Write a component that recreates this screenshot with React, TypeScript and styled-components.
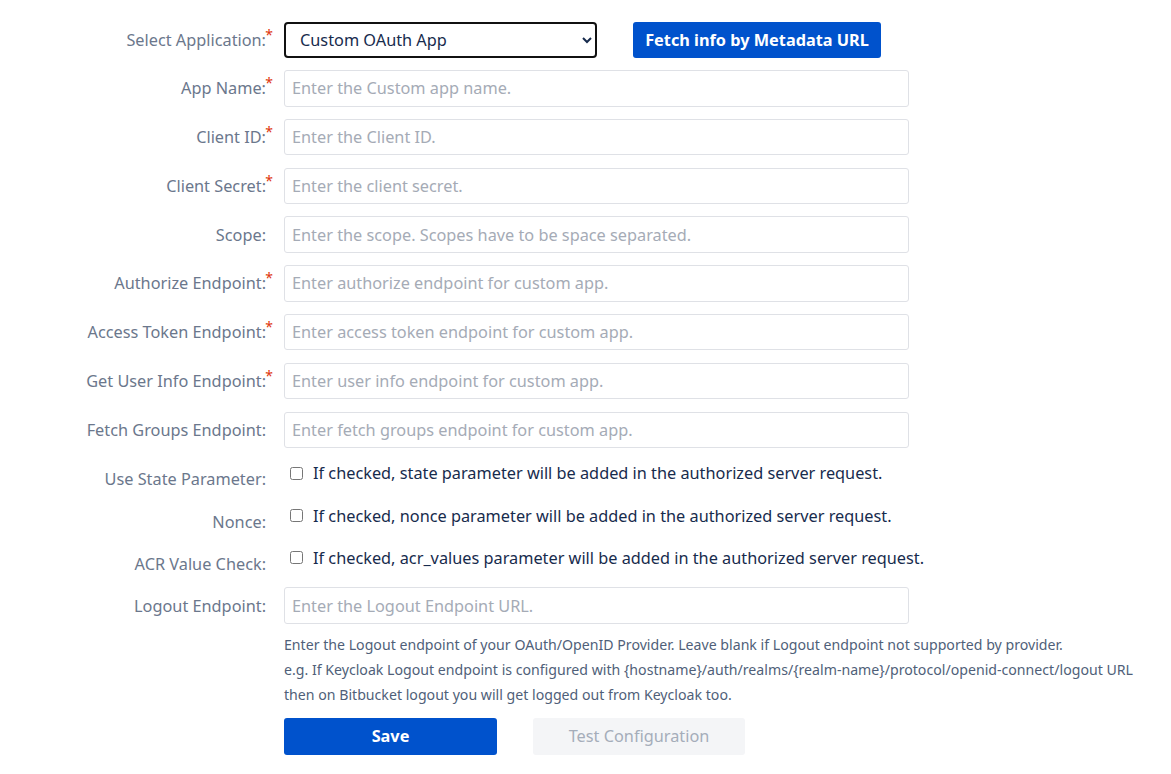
import styled, { createGlobalStyle } from "styled-components";

const GlobalStyle = createGlobalStyle`
  html, body {
    margin: 0;
    padding: 0;
    background: #ffffff;
    font-family: "Noto Sans", "Open Sans", sans-serif;
  }
`;

const Form = styled.form`
  display: flex;
  flex-direction: column;
  padding-top: 22px;
  width: 1171px;
`;

const Row = styled.div<{ $height?: number; $gap?: number; $align?: string }>`
  display: flex;
  align-items: ${(p) => p.$align || "center"};
  height: ${(p) => p.$height ?? 36}px;
  margin-bottom: ${(p) => p.$gap ?? 12.8}px;
`;

const Label = styled.label<{ $offset?: number }>`
  position: relative;
  flex: 0 0 266px;
  margin-right: 18px;
  text-align: right;
  font-size: 16.3px;
  line-height: 24px;
  color: #6b778c;
  padding-top: ${(p) => p.$offset ?? 0}px;
`;

const Required = styled.span`
  position: absolute;
  right: -7px;
  top: -5px;
  color: #de350b;
  font-size: 14px;
`;

const Select = styled.select`
  width: 313px;
  height: 36px;
  box-sizing: border-box;
  border: 2px solid #111111;
  border-radius: 4px;
  padding: 0 8px 0 10px;
  font-family: inherit;
  font-size: 16.3px;
  color: #172b4d;
  background: #ffffff;
`;

const Button = styled.button<{ $variant?: "primary" | "disabled"; $width: number }>`
  width: ${(p) => p.$width}px;
  height: 37px;
  border: none;
  border-radius: 3px;
  font-family: inherit;
  font-size: 16.3px;
  font-weight: ${(p) => (p.$variant === "disabled" ? 400 : 700)};
  background: ${(p) => (p.$variant === "disabled" ? "#f4f5f7" : "#0052cc")};
  color: ${(p) => (p.$variant === "disabled" ? "#a5adba" : "#ffffff")};
  cursor: pointer;
`;

const FetchButton = styled(Button)`
  margin-left: 36px;
  height: 36px;
`;

const Input = styled.input`
  width: 625px;
  height: 36.5px;
  box-sizing: border-box;
  border: 1px solid #dfe1e6;
  border-radius: 3px;
  padding: 0 7px;
  font-family: inherit;
  font-size: 16.3px;
  color: #172b4d;
  background: #ffffff;

  &::placeholder {
    color: #a5abb6;
  }
`;

const CheckLabel = styled.label`
  display: flex;
  align-items: center;
  padding-top: 1px;
  font-size: 16.3px;
  line-height: 24px;
  color: #172b4d;
`;

const CheckBox = styled.input`
  width: 13px;
  height: 13px;
  margin: 0 10px 0 6px;
`;

const Help = styled.div`
  margin-left: 284px;
  margin-top: 8px;
  font-size: 14.15px;
  line-height: 25px;
  color: #505f79;
`;

const Actions = styled.div`
  display: flex;
  gap: 36px;
  margin-left: 284px;
  margin-top: 11px;
`;

const textFields = [
  { label: "App Name:", placeholder: "Enter the Custom app name.", required: true },
  { label: "Client ID:", placeholder: "Enter the Client ID.", required: true },
  { label: "Client Secret:", placeholder: "Enter the client secret.", required: true },
  { label: "Scope:", placeholder: "Enter the scope. Scopes have to be space separated.", required: false },
  { label: "Authorize Endpoint:", placeholder: "Enter authorize endpoint for custom app.", required: true },
  { label: "Access Token Endpoint:", placeholder: "Enter access token endpoint for custom app.", required: true },
  { label: "Get User Info Endpoint:", placeholder: "Enter user info endpoint for custom app.", required: true },
  { label: "Fetch Groups Endpoint:", placeholder: "Enter fetch groups endpoint for custom app.", required: false },
];

const checks = [
  { label: "Use State Parameter:", text: "If checked, state parameter will be added in the authorized server request." },
  { label: "Nonce:", text: "If checked, nonce parameter will be added in the authorized server request." },
  { label: "ACR Value Check:", text: "If checked, acr_values parameter will be added in the authorized server request." },
];

export default function App() {
  return (
    <>
      <GlobalStyle />
      <Form onSubmit={(e) => e.preventDefault()}>
        <Row $gap={12}>
          <Label>
            Select Application:<Required>*</Required>
          </Label>
          <Select defaultValue="custom">
            <option value="custom">Custom OAuth App</option>
          </Select>
          <FetchButton type="button" $width={248}>
            Fetch info by Metadata URL
          </FetchButton>
        </Row>
        {textFields.map((f) => (
          <Row key={f.label} $height={36.5} $gap={12.3}>
            <Label>
              {f.label}
              {f.required && <Required>*</Required>}
            </Label>
            <Input placeholder={f.placeholder} />
          </Row>
        ))}
        {checks.map((c) => (
          <Row key={c.label} $height={29.5} $align="flex-start">
            <Label $offset={7}>{c.label}</Label>
            <CheckLabel>
              <CheckBox type="checkbox" />
              {c.text}
            </CheckLabel>
          </Row>
        ))}
        <Row $height={36.5} $gap={0}>
          <Label>Logout Endpoint:</Label>
          <Input placeholder="Enter the Logout Endpoint URL." />
        </Row>
        <Help>
          Enter the Logout endpoint of your OAuth/OpenID Provider. Leave blank if Logout endpoint not supported by provider.
          <br />
          e.g. If Keycloak Logout endpoint is configured with {"{hostname}"}/auth/realms/{"{realm-name}"}/protocol/openid-connect/logout URL
          <br />
          then on Bitbucket logout you will get logged out from Keycloak too.
        </Help>
        <Actions>
          <Button type="submit" $width={213}>
            Save
          </Button>
          <Button type="button" $variant="disabled" $width={212}>
            Test Configuration
          </Button>
        </Actions>
      </Form>
    </>
  );
}
